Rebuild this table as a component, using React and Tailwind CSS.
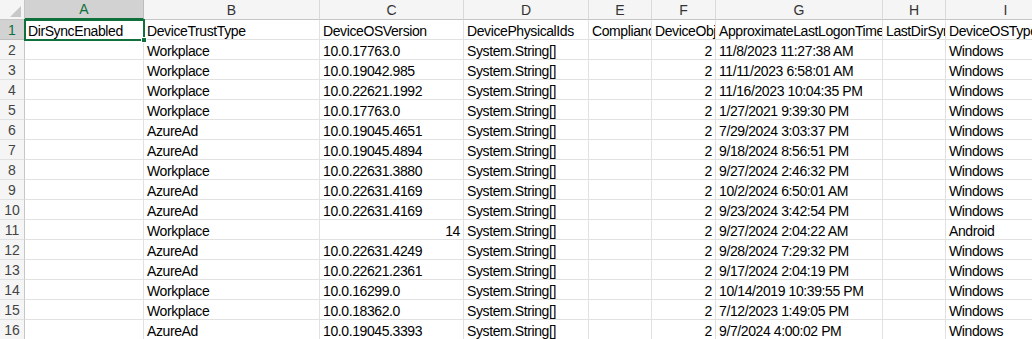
import React from 'react';

const widths = [25, 119, 176, 144, 125, 63, 64, 167, 63, 120];
const letters = ['A', 'B', 'C', 'D', 'E', 'F', 'G', 'H', 'I'];

const header = [
  'DirSyncEnabled',
  'DeviceTrustType',
  'DeviceOSVersion',
  'DevicePhysicalIds',
  'ComplianceState',
  'DeviceObjectVersion',
  'ApproximateLastLogonTimestamp',
  'LastDirSyncTime',
  'DeviceOSType',
];

// [trust type, os version, logon time, os type]
const rows = [
  ['Workplace', '10.0.17763.0', '11/8/2023 11:27:38 AM', 'Windows'],
  ['Workplace', '10.0.19042.985', '11/11/2023 6:58:01 AM', 'Windows'],
  ['Workplace', '10.0.22621.1992', '11/16/2023 10:04:35 PM', 'Windows'],
  ['Workplace', '10.0.17763.0', '1/27/2021 9:39:30 PM', 'Windows'],
  ['AzureAd', '10.0.19045.4651', '7/29/2024 3:03:37 PM', 'Windows'],
  ['AzureAd', '10.0.19045.4894', '9/18/2024 8:56:51 PM', 'Windows'],
  ['Workplace', '10.0.22631.3880', '9/27/2024 2:46:32 PM', 'Windows'],
  ['AzureAd', '10.0.22631.4169', '10/2/2024 6:50:01 AM', 'Windows'],
  ['AzureAd', '10.0.22631.4169', '9/23/2024 3:42:54 PM', 'Windows'],
  ['Workplace', 14, '9/27/2024 2:04:22 AM', 'Android'],
  ['AzureAd', '10.0.22631.4249', '9/28/2024 7:29:32 PM', 'Windows'],
  ['AzureAd', '10.0.22621.2361', '9/17/2024 2:04:19 PM', 'Windows'],
  ['Workplace', '10.0.16299.0', '10/14/2019 10:39:55 PM', 'Windows'],
  ['Workplace', '10.0.18362.0', '7/12/2023 1:49:05 PM', 'Windows'],
  ['AzureAd', '10.0.19045.3393', '9/7/2024 4:00:02 PM', 'Windows'],
];

function Cell({ children, right }) {
  return (
    <div
      className={
        'h-[20px] border-r border-b border-[#e1e1e1] px-[3px] pt-[2px] overflow-hidden whitespace-nowrap flex items-center text-black tracking-[-0.4px] ' +
        (right ? 'justify-end' : '')
      }
    >
      {children}
    </div>
  );
}

function RowHead({ n, selected }) {
  return (
    <div
      className={
        'h-[20px] flex items-center justify-center pt-[1px] border-b border-r ' +
        (selected
          ? 'bg-[#d2d2d2] text-[#0f703b] border-b-[#bdbdbd] border-r-[#0f703b]'
          : 'bg-[#f5f5f5] text-[#444] border-b-[#e1e1e1] border-r-[#c6c6c6]')
      }
    >
      {n}
    </div>
  );
}

export default function App() {
  return (
    <div
      className="w-[1032px] h-[339px] overflow-hidden bg-white text-[14px] leading-none"
      style={{ fontFamily: '"Liberation Sans", Arial, sans-serif' }}
    >
      <div
        className="grid"
        style={{ gridTemplateColumns: widths.map((w) => w + 'px').join(' ') }}
      >
        {/* corner */}
        <div className="h-[20px] bg-[#f5f5f5] border-r border-b border-[#c6c6c6] relative">
          <svg className="absolute right-[3px] bottom-[2px]" width="11" height="11" viewBox="0 0 11 11">
            <polygon points="11,0 11,11 0,11" fill="#c8c8c8" />
          </svg>
        </div>
        {letters.map((l, i) => (
          <div
            key={l}
            className={
              'h-[20px] flex items-center justify-center border-r ' +
              (i === 0
                ? 'bg-[#d2d2d2] text-[#0f703b] border-b-2 border-b-[#0f703b] border-r-[#bdbdbd]'
                : 'bg-[#f5f5f5] text-[#333] border-b border-b-[#c6c6c6] border-r-[#dadada]')
            }
          >
            {l}
          </div>
        ))}

        {/* row 1: headers */}
        <RowHead n={1} selected />
        <div className="h-[20px] relative border-b border-r border-[#e1e1e1]">
          <div className="absolute -left-[1px] -top-[1px] right-[-2px] bottom-[-2px] border-2 border-[#0f703b] z-10" />
          <div className="absolute right-[-4px] bottom-[-4px] w-[6px] h-[6px] bg-[#0f703b] border border-white z-20" />
          <div className="h-full px-[3px] pt-[2px] flex items-center whitespace-nowrap overflow-hidden tracking-[-0.4px]">{header[0]}</div>
        </div>
        {header.slice(1).map((h) => (
          <Cell key={h}>{h}</Cell>
        ))}

        {rows.map((r, i) => (
          <React.Fragment key={i}>
            <RowHead n={i + 2} />
            <Cell></Cell>
            <Cell>{r[0]}</Cell>
            <Cell right={typeof r[1] === 'number'}>{r[1]}</Cell>
            <Cell>System.String[]</Cell>
            <Cell></Cell>
            <Cell right>2</Cell>
            <Cell>{r[2]}</Cell>
            <Cell></Cell>
            <Cell>{r[3]}</Cell>
          </React.Fragment>
        ))}
      </div>
    </div>
  );
}
